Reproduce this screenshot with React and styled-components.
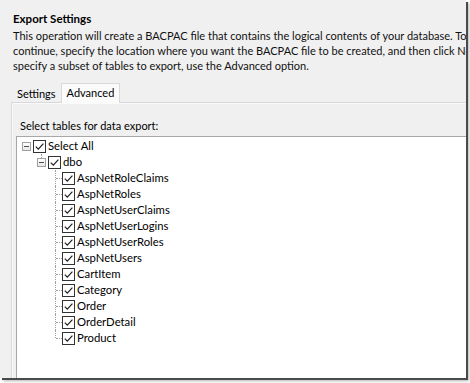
import React from 'react';
import styled, { createGlobalStyle } from 'styled-components';

const GlobalStyle = createGlobalStyle`
  html, body {
    margin: 0;
    padding: 0;
    background: #fff;
  }
  body {
    font-family: Lato, "Noto Sans", sans-serif;
  }
`;

const tables = [
  'AspNetRoleClaims',
  'AspNetRoles',
  'AspNetUserClaims',
  'AspNetUserLogins',
  'AspNetUserRoles',
  'AspNetUsers',
  'CartItem',
  'Category',
  'Order',
  'OrderDetail',
  'Product',
];

const rows = [
  { id: 'all', label: 'Select All', level: 0, kind: 'root' },
  { id: 'dbo', label: 'dbo', level: 1, kind: 'branch' },
  ...tables.map((t, i) => ({
    id: t,
    label: t,
    level: 2,
    kind: i === tables.length - 1 ? 'last' : 'leaf',
  })),
];

const App = () => {
  return (
    <Page>
      <GlobalStyle />
      <Frame>
        <Heading>Export Settings</Heading>
        <Description>
          <Line>This operation will create a BACPAC file that contains the logical contents of your database. To</Line>
          <Line>continue, specify the location where you want the BACPAC file to be created, and then click Next. To</Line>
          <Line>specify a subset of tables to export, use the Advanced option.</Line>
        </Description>
        <TabStrip>
          <Tab>Settings</Tab>
          <Tab $active>Advanced</Tab>
        </TabStrip>
        <Panel>
          <Caption>Select tables for data export:</Caption>
          <TreeBox>
            {rows.map((row) => (
              <TreeRow key={row.id} {...row} />
            ))}
          </TreeBox>
        </Panel>
      </Frame>
    </Page>
  );
};

const TreeRow = ({ label, level, kind }) => {
  const hasExpander = kind === 'root' || kind === 'branch';
  return (
    <Row $level={level}>
      <Gutter $wide={hasExpander} $kind={kind}>
        {hasExpander && <Expander />}
      </Gutter>
      <Check>
        <svg width="11" height="11" viewBox="0 0 11 11">
          <path d="M1.8 5.6 L4.3 8.1 L9.4 2.6" fill="none" stroke="#1e1e1e" strokeWidth="1.2" />
        </svg>
      </Check>
      <Label>{label}</Label>
    </Row>
  );
};

const Page = styled.div`
  width: 470px;
  height: 383px;
  overflow: hidden;
  background: #fff;
`;

const Frame = styled.div`
  width: 466px;
  height: 378px;
  box-sizing: border-box;
  padding-top: 11px;
  background: #f0f0f0;
  box-shadow: 2px 2px 0 #4a4a4a, 3px 3px 3px rgba(0, 0, 0, 0.3);
  display: flex;
  flex-direction: column;
  overflow: hidden;
  font-size: 11px;
  color: #000;
`;

const Heading = styled.div`
  padding-left: 13px;
  font-size: 11.5px;
  font-weight: 700;
  line-height: 16px;
`;

const Description = styled.div`
  margin-top: 1px;
  padding-left: 13px;
  line-height: 15px;
  color: #111;
`;

const Line = styled.div`
  white-space: nowrap;
`;

const TabStrip = styled.div`
  display: flex;
  align-items: flex-end;
  height: 19px;
  margin: 10px 0 0 12px;
  position: relative;
  z-index: 1;
`;

const Tab = styled.div`
  box-sizing: border-box;
  height: ${(p) => (p.$active ? '20px' : '17px')};
  padding: ${(p) => (p.$active ? '1px 5px 0' : '0 4px')};
  line-height: 16px;
  background: ${(p) => (p.$active ? '#fbfbfb' : '#f0f0f0')};
  border: 1px solid ${(p) => (p.$active ? '#d9d9d9' : 'transparent')};
  border-bottom: none;
  margin-bottom: ${(p) => (p.$active ? '-1px' : '0')};
`;

const Panel = styled.div`
  flex: 1;
  display: flex;
  flex-direction: column;
  margin: 0 -30px 0 11px;
  padding: 15px 0 0 4px;
  border: 1px solid #d9d9d9;
  border-bottom: none;
  box-shadow: inset 1px 1px 0 #fafafa;
  background: #f0f0f0;
  min-height: 0;
`;

const Caption = styled.div`
  padding-left: 4px;
  line-height: 15px;
`;

const TreeBox = styled.div`
  flex: 1;
  margin-top: 3px;
  padding-top: 1px;
  background: #fff;
  border: 1px solid #a7a7a7;
  border-bottom: none;
  border-right: none;
`;

const Row = styled.div`
  display: flex;
  align-items: center;
  height: 16px;
  padding-left: ${(p) => 5 + p.$level * 15}px;
  font-size: 11.3px;
`;

const Gutter = styled.div`
  position: relative;
  align-self: stretch;
  width: ${(p) => (p.$wide ? '11px' : '10px')};
  flex: none;
  display: flex;
  align-items: center;

  &::before {
    content: '';
    display: ${(p) => (p.$kind === 'root' ? 'none' : 'block')};
    position: absolute;
    left: ${(p) => (p.$wide ? '4px' : '3px')};
    top: 0;
    height: ${(p) => (p.$kind === 'branch' ? '4px' : p.$kind === 'last' ? '8px' : '16px')};
    border-left: 1px dotted #a0a0a0;
  }

  &::after {
    content: '';
    display: ${(p) => (p.$wide ? 'none' : 'block')};
    position: absolute;
    left: 4px;
    right: 0;
    top: 8px;
    border-top: 1px dotted #a0a0a0;
  }
`;

const Expander = styled.span`
  position: relative;
  box-sizing: border-box;
  width: 9px;
  height: 9px;
  border: 1px solid #a0a0a0;
  background: linear-gradient(#ffffff, #e6e6e6);

  &::after {
    content: '';
    position: absolute;
    left: 1px;
    top: 3px;
    width: 5px;
    height: 1px;
    background: #4d4d4d;
  }
`;

const Check = styled.span`
  box-sizing: border-box;
  width: 13px;
  height: 13px;
  flex: none;
  display: grid;
  place-items: center;
  border: 1px solid #333;
  background: #fff;
`;

const Label = styled.span`
  margin-left: 2px;
  white-space: nowrap;
  line-height: 16px;
`;

export default App;
